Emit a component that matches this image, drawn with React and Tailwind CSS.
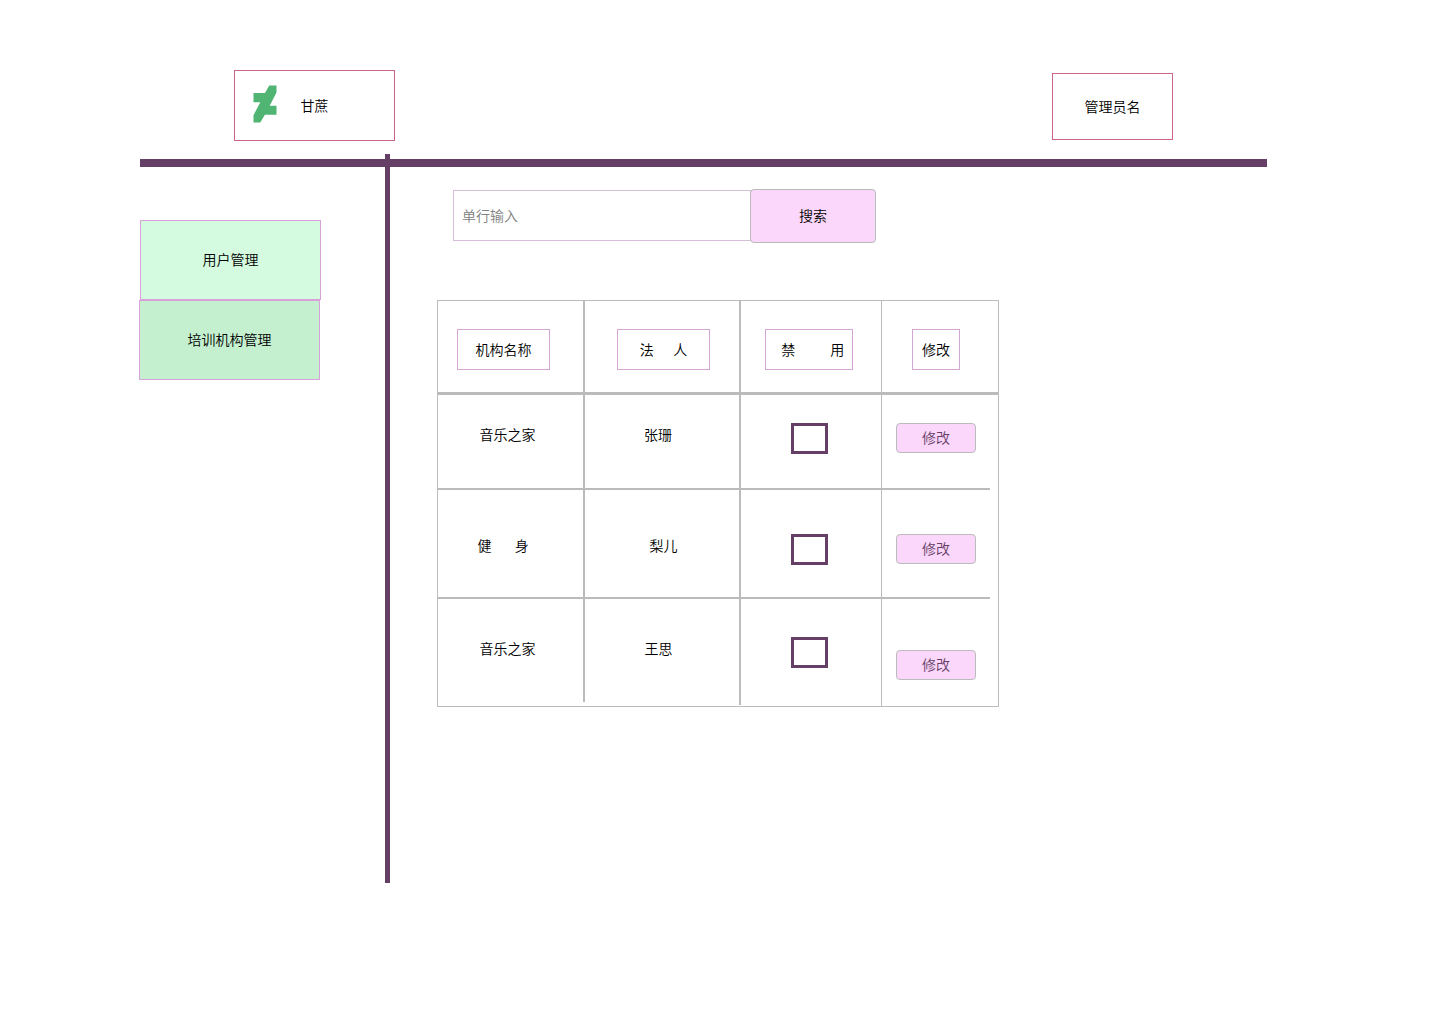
const rows = [
  {
    name: '音乐之家', nameAt: 'pl-[41.5px] pt-[30px]',
    person: '张珊', personAt: 'pl-[59px] pt-[30px]',
    boxAt: 'pl-[50px] pt-[28px]', editAt: 'pl-[14px] pt-[28px]',
    row: 'h-[95px] w-[552px] border-b-2',
    c1: 'h-[93px]', c2: 'h-[93px]',
  },
  {
    name: '健      身', nameAt: 'pl-[39.4px] pt-[46px]',
    person: '梨儿', personAt: 'pl-[64.5px] pt-[46px]',
    boxAt: 'pl-[50px] pt-[44px]', editAt: 'pl-[14px] pt-[44px]',
    row: 'h-[109px] w-[552px] border-b-2',
    c1: 'h-[107px]', c2: 'h-[107px]',
  },
  {
    name: '音乐之家', nameAt: 'pl-[41.5px] pt-[40px]',
    person: '王思', personAt: 'pl-[59.5px] pt-[40px]',
    boxAt: 'pl-[50px] pt-[38px]', editAt: 'pl-[14px] pt-[51px]',
    row: 'h-[107px] w-[552px]',
    c1: 'h-[103px]', c2: 'h-[106px]',
  },
];

function Header() {
  return (
    <header className="flex h-[89px] items-start pl-[94px]">
      <div className="flex h-[71px] w-[161px] items-center border border-[#cc6688]">
        <svg className="-mt-[3px] ml-[18px] h-[38px] w-6" viewBox="0 0 24 38" fill="#50b473">
          <path d="M16.2 .4H23.5V7.6L16.7 20.7H23.5V29.8H11.9L7.3 37.6H.5V30.3L7.3 17.3H.5V8H12Z" />
        </svg>
        <span className="ml-[23.5px]">甘蔗</span>
      </div>
      <div className="mt-[3px] ml-[657px] flex h-[67px] w-[121px] items-center justify-center border border-[#cc6688]">
        管理员名
      </div>
    </header>
  );
}

function Sidebar() {
  return (
    <nav className="mt-[53px] w-[245px] shrink-0">
      <div className="flex h-20 w-[181px] items-center justify-center border border-[#d9a0d9] bg-[#d4fae0]">
        用户管理
      </div>
      <div className="-ml-px flex h-20 w-[181px] items-center justify-center border border-[#d9a0d9] bg-[#c4f0d0]">
        培训机构管理
      </div>
    </nav>
  );
}

function SearchBar() {
  return (
    <div className="ml-4 flex items-start">
      <input
        className="mt-px h-[51px] w-[298px] border border-[#d5bfd8] px-2 outline-none placeholder:text-[#808080]"
        placeholder="单行输入"
      />
      <button className="-ml-px h-[54px] w-[126px] rounded border border-[#bbb] bg-[#fbd7fb]">搜索</button>
    </div>
  );
}

function Label({ className, children }) {
  return (
    <div className={`mt-7 flex h-[41px] items-center justify-center border border-[#d5a5d5] whitespace-pre ${className}`}>
      {children}
    </div>
  );
}

function OrgTable() {
  return (
    <section className="mt-[57px] h-[407px] w-[562px] border border-[#bbb]">
      <div className="flex h-[94px] border-b-[3px] border-[#bbb]">
        <div className="w-[147px] border-r-2 border-[#bbb]">
          <Label className="ml-[19px] w-[93px]">机构名称</Label>
        </div>
        <div className="w-[156px] border-r-2 border-[#bbb]">
          <Label className="ml-8 w-[93px]">{'法     人'}</Label>
        </div>
        <div className="w-[141px] border-r border-[#bbb]">
          <Label className="ml-6 w-[88px] pl-[7.5px]">{'禁         用'}</Label>
        </div>
        <div>
          <Label className="ml-[30px] w-12">修改</Label>
        </div>
      </div>
      {rows.map((r, i) => (
        <div key={i} className={`flex items-start border-[#bbb] whitespace-pre ${r.row}`}>
          <div className={`w-[147px] border-r-2 border-[#bbb] ${r.c1} ${r.nameAt}`}>{r.name}</div>
          <div className={`w-[156px] border-r-2 border-[#bbb] ${r.c2} ${r.personAt}`}>{r.person}</div>
          <div className={`h-full w-[141px] border-r border-[#bbb] ${r.boxAt}`}>
            <div className="h-[31px] w-[37px] border-[3px] border-[#663f66]" />
          </div>
          <div className={r.editAt}>
            <button className="block h-[30px] w-20 rounded border border-[#bbb] bg-[#fbd7fb] text-[#663f66]">修改</button>
          </div>
        </div>
      ))}
    </section>
  );
}

export default function App() {
  return (
    <div className="h-[1024px] w-[1440px] overflow-hidden bg-white pt-[70px] pl-[140px] font-['Liberation_Sans','Noto_Sans_CJK_SC',sans-serif] text-[14px] leading-[20px] font-[350] text-black antialiased">
      <Header />
      <div className="h-2 w-[1127px] bg-[#663f66]" />
      <div className="flex items-start">
        <Sidebar />
        <div className="-mt-[13px] h-[729px] w-[5px] shrink-0 bg-[#663f66]" />
        <main className="mt-[22px] ml-[47px]">
          <SearchBar />
          <OrgTable />
        </main>
      </div>
    </div>
  );
}
